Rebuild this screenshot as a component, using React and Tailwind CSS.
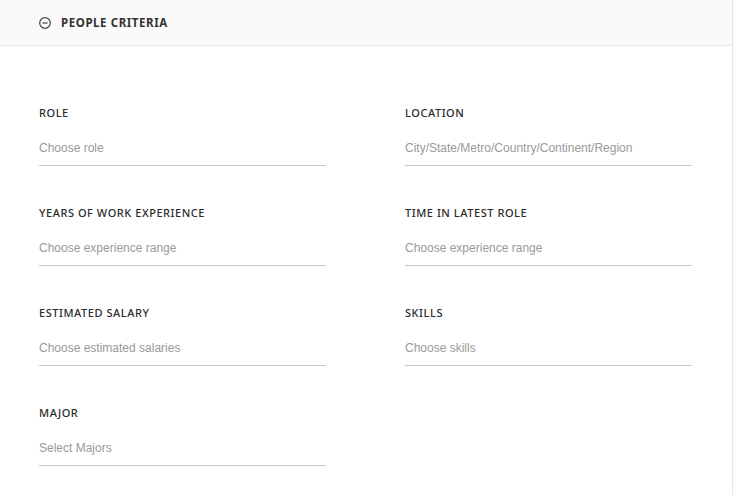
import React from "react";

const FIELDS = [
  ["Role", "Choose role"],
  ["Location", "City/State/Metro/Country/Continent/Region"],
  ["Years of work experience", "Choose experience range"],
  ["Time in latest role", "Choose experience range"],
  ["Estimated salary", "Choose estimated salaries"],
  ["Skills", "Choose skills"],
  ["Major", "Select Majors"],
];

function Field({ label, placeholder }) {
  return (
    <div className="flex flex-col">
      <label className="text-[11px] font-medium uppercase tracking-[0.05em] text-[#2b2b2b] leading-[14px] font-['Noto_Sans',sans-serif]">
        {label}
      </label>
      <input
        placeholder={placeholder}
        className="mt-[19px] h-[27px] pb-[8px] border-b border-[#c8c8c8] bg-transparent outline-none text-[12px] font-['Liberation_Sans',Arial,sans-serif] placeholder:text-[#9a9a9a]"
      />
    </div>
  );
}

export default function App() {
  return (
    <div className="w-[733px] h-[495px] bg-white border-r border-[#e6e6e6] overflow-hidden">
      {/* HEADER */}
      <div className="h-[46px] bg-[#fafafa] border-b border-[#e8e8e8] flex items-center pl-[39px] gap-[10px]">
        <svg width="12" height="12" viewBox="0 0 12 12" fill="none">
          <circle cx="6" cy="6" r="5.3" stroke="#444" strokeWidth="1.2" />
          <line x1="3.4" y1="6" x2="8.6" y2="6" stroke="#444" strokeWidth="1.2" />
        </svg>
        <span className="text-[11.5px] font-bold uppercase tracking-[0.05em] text-[#333] font-['Noto_Sans',sans-serif]">
          People criteria
        </span>
      </div>

      {/* FORM GRID */}
      <div className="grid grid-cols-[287px_287px] gap-x-[79px] gap-y-[40px] pl-[39px] pt-[60px]">
        {FIELDS.map(([label, placeholder]) => (
          <Field key={label} label={label} placeholder={placeholder} />
        ))}
      </div>
    </div>
  );
}
